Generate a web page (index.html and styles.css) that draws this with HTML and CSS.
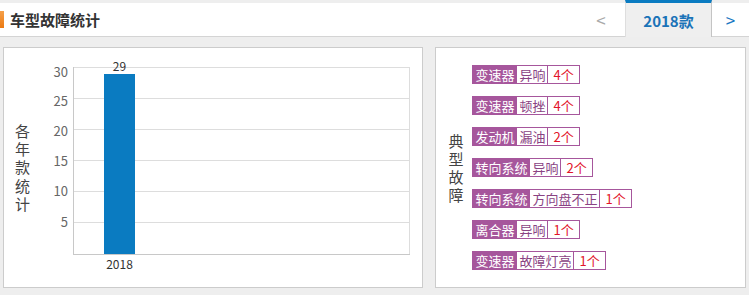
FILE: index.html
```html
<!DOCTYPE html>
<html lang="zh-CN">
<head>
  <meta charset="UTF-8">
  <title>车型故障统计</title>
  <link rel="stylesheet" href="styles.css">
</head>
<body>

  <div class="header">
    <div class="title"><span class="mark"></span>车型故障统计</div>
    <a class="prev">&lt;</a>
    <a class="tab">2018款</a>
    <a class="next">&gt;</a>
  </div>

  <div class="main">
    <div class="panel chart-panel">
      <div class="ytitle">各年款统计</div>
      <svg class="chart" width="389" height="239" viewBox="0 0 389 239">
        <g class="grid">
          <line x1="43" y1="19.5" x2="379" y2="19.5"/>
          <line x1="43" y1="50.5" x2="379" y2="50.5"/>
          <line x1="43" y1="81.5" x2="379" y2="81.5"/>
          <line x1="43" y1="112.5" x2="379" y2="112.5"/>
          <line x1="43" y1="143.5" x2="379" y2="143.5"/>
          <line x1="43" y1="174.5" x2="379" y2="174.5"/>
          <line x1="379.5" y1="19" x2="379.5" y2="206"/>
        </g>
        <g class="axis">
          <line x1="43.5" y1="19" x2="43.5" y2="206"/>
          <line x1="43" y1="206.5" x2="380" y2="206.5"/>
        </g>
        <rect class="bar" x="74" y="26" width="31" height="180"/>
        <text class="val" x="89.5" y="23">29</text>
        <text class="val" x="89.5" y="221">2018</text>
        <g class="ylabels">
          <text x="38" y="29">30</text>
          <text x="38" y="58">25</text>
          <text x="38" y="88">20</text>
          <text x="38" y="118">15</text>
          <text x="38" y="148">10</text>
          <text x="38" y="179">5</text>
        </g>
      </svg>
    </div>

    <div class="panel fault-panel">
      <div class="fault-label">典型故障</div>
      <div class="fault-list">
        <div class="tag"><span class="part">变速器</span><span class="desc">异响</span><span class="count">4个</span></div>
        <div class="tag"><span class="part">变速器</span><span class="desc">顿挫</span><span class="count">4个</span></div>
        <div class="tag"><span class="part">发动机</span><span class="desc">漏油</span><span class="count">2个</span></div>
        <div class="tag"><span class="part">转向系统</span><span class="desc">异响</span><span class="count">2个</span></div>
        <div class="tag"><span class="part">转向系统</span><span class="desc">方向盘不正</span><span class="count">1个</span></div>
        <div class="tag"><span class="part">离合器</span><span class="desc">异响</span><span class="count">1个</span></div>
        <div class="tag"><span class="part">变速器</span><span class="desc">故障灯亮</span><span class="count">1个</span></div>
      </div>
    </div>
  </div>

</body>
</html>
```

FILE: styles.css
```css
html {
  overflow: hidden;
}
body {
  margin: 0;
  background-color: #eeeeee;
  font-family: "Noto Sans CJK SC", sans-serif;
  color: #333;
}
.header {
  margin-top: 3px;
  height: 33px;
  background-color: #fff;
  border-bottom: 1px solid #d4d4d4;
  display: flex;
}
.title {
  flex: 1;
  display: flex;
  align-items: center;
  font-size: 15px;
  font-weight: bold;
  color: #333;
}
.mark {
  width: 4px;
  height: 17px;
  margin-right: 6px;
  background: linear-gradient(#f5a04a, #ec7a12);
}
.prev, .next {
  display: flex;
  align-items: center;
  justify-content: center;
  font-size: 17px;
  cursor: pointer;
}
.prev {
  width: 48px;
  color: #aaa;
}
.next {
  width: 37px;
  color: #1a78c2;
}
.tab {
  width: 85px;
  margin-top: -3px;
  margin-bottom: -1px;
  border-top: 3px solid #0a7bc1;
  border-left: 1px solid #dedede;
  border-right: 1px solid #c4c4c4;
  background-color: #efefef;
  display: flex;
  align-items: center;
  justify-content: center;
  font-size: 15px;
  font-weight: bold;
  color: #1a73b8;
}
.main {
  display: flex;
  gap: 12px;
  padding: 10px 3px 0 3px;
}
.panel {
  height: 239px;
  background-color: #fff;
  border: 1px solid #cccccc;
}
.chart-panel {
  width: 419px;
  display: flex;
  align-items: center;
}
.ytitle {
  width: 15px;
  margin-left: 11px;
  font-size: 15px;
  line-height: 18.3px;
  color: #444;
}
.chart {
  display: block;
  align-self: flex-start;
}
.grid line {
  stroke: #dddddd;
  stroke-width: 1;
}
.axis line {
  stroke: #c8c8c8;
  stroke-width: 1;
}
.bar {
  fill: #0a7bc1;
}
.val {
  font-size: 12px;
  fill: #333;
  text-anchor: middle;
}
.ylabels text {
  font-size: 13px;
  fill: #666;
  text-anchor: end;
}
.fault-panel {
  width: 309px;
  display: flex;
  align-items: center;
}
.fault-label {
  width: 15px;
  margin-left: 12px;
  margin-right: 9px;
  font-size: 15px;
  line-height: 18px;
  color: #444;
}
.fault-list {
  display: flex;
  flex-direction: column;
  align-items: flex-start;
  gap: 12px;
}
.tag {
  display: flex;
  box-sizing: border-box;
  height: 19px;
  border: 1px solid #a6569c;
  font-size: 13px;
  line-height: 17px;
}
.tag span {
  padding: 0 2px;
}
.tag span + span {
  border-left: 1px solid #a6569c;
}
.part {
  background-color: #a6569c;
  color: #fff;
}
.desc {
  color: #8a4383;
}
.count {
  padding: 0 5px !important;
  color: #e2142a;
}
```
